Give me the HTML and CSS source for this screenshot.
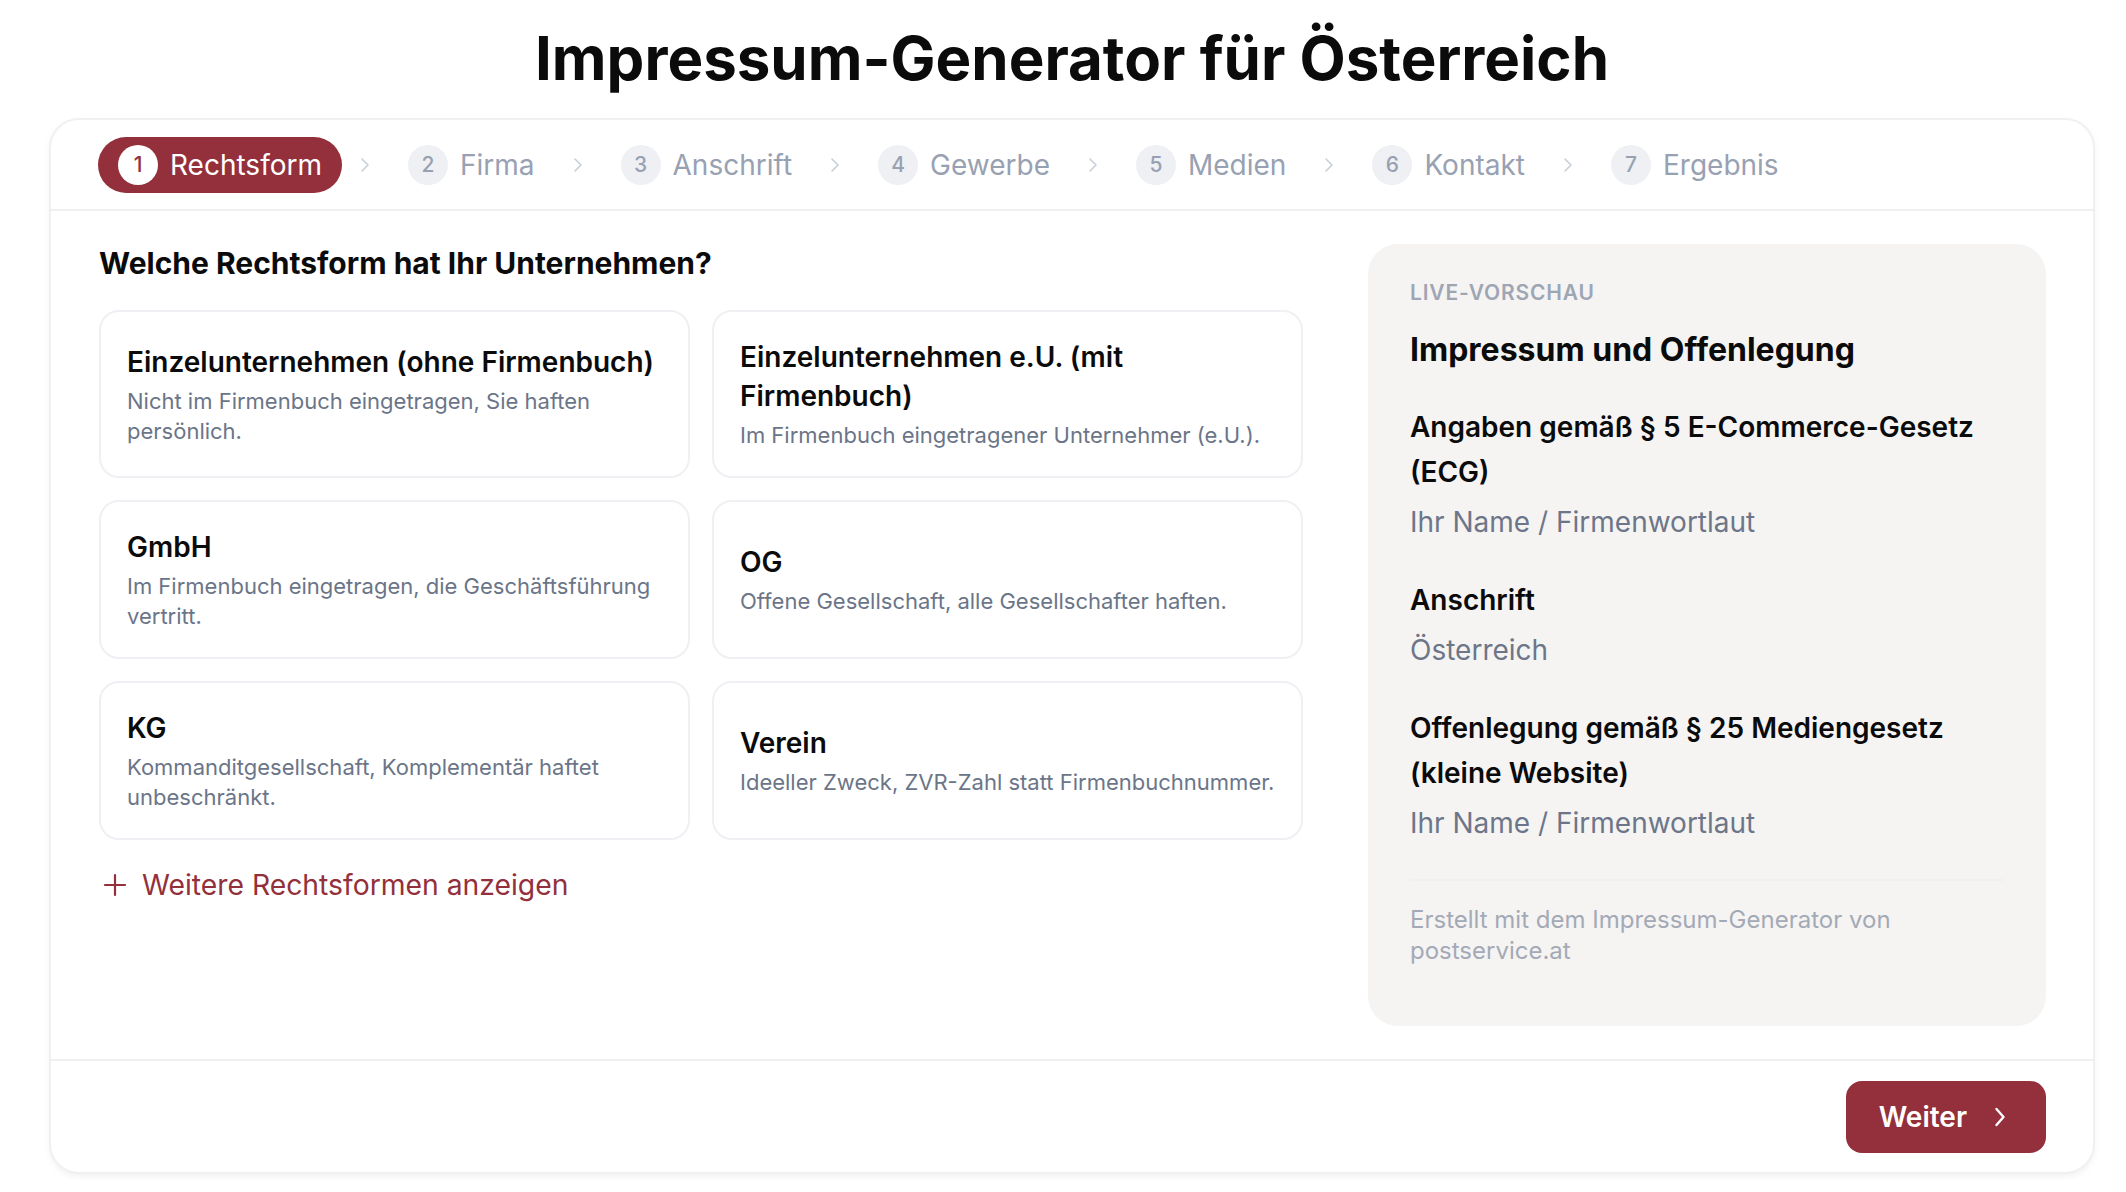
FILE: index.html
```html
<!DOCTYPE html>
<html lang="de">
<head>
    <meta charset="UTF-8">
    <meta name="viewport" content="width=device-width, initial-scale=1.0">
    <title>Impressum-Generator für Österreich</title>
    <link rel="stylesheet" href="styles.css">
</head>
<body>
    <div class="page">
        <h1 class="page-title">Impressum-Generator für Österreich</h1>

        <div class="wizard">
            <nav class="steps">
                <div class="step active"><span class="step-num">1</span><span>Rechtsform</span></div>
                <svg class="step-sep" viewBox="0 0 12 16"><path d="M3 2l6 6-6 6"/></svg>
                <div class="step"><span class="step-num">2</span><span>Firma</span></div>
                <svg class="step-sep" viewBox="0 0 12 16"><path d="M3 2l6 6-6 6"/></svg>
                <div class="step"><span class="step-num">3</span><span>Anschrift</span></div>
                <svg class="step-sep" viewBox="0 0 12 16"><path d="M3 2l6 6-6 6"/></svg>
                <div class="step"><span class="step-num">4</span><span>Gewerbe</span></div>
                <svg class="step-sep" viewBox="0 0 12 16"><path d="M3 2l6 6-6 6"/></svg>
                <div class="step"><span class="step-num">5</span><span>Medien</span></div>
                <svg class="step-sep" viewBox="0 0 12 16"><path d="M3 2l6 6-6 6"/></svg>
                <div class="step"><span class="step-num">6</span><span>Kontakt</span></div>
                <svg class="step-sep" viewBox="0 0 12 16"><path d="M3 2l6 6-6 6"/></svg>
                <div class="step"><span class="step-num">7</span><span>Ergebnis</span></div>
            </nav>

            <div class="wizard-body">
                <section class="form-col">
                    <h2 class="question">Welche Rechtsform hat Ihr Unternehmen?</h2>

                    <div class="options">
                        <div class="option">
                            <div class="option-title">Einzelunternehmen (ohne Firmenbuch)</div>
                            <div class="option-desc">Nicht im Firmenbuch eingetragen, Sie haften persönlich.</div>
                        </div>
                        <div class="option">
                            <div class="option-title">Einzelunternehmen e.U. (mit Firmenbuch)</div>
                            <div class="option-desc">Im Firmenbuch eingetragener Unternehmer (e.U.).</div>
                        </div>
                        <div class="option">
                            <div class="option-title">GmbH</div>
                            <div class="option-desc">Im Firmenbuch eingetragen, die Geschäftsführung vertritt.</div>
                        </div>
                        <div class="option">
                            <div class="option-title">OG</div>
                            <div class="option-desc">Offene Gesellschaft, alle Gesellschafter haften.</div>
                        </div>
                        <div class="option">
                            <div class="option-title">KG</div>
                            <div class="option-desc">Kommanditgesellschaft, Komplementär haftet unbeschränkt.</div>
                        </div>
                        <div class="option">
                            <div class="option-title">Verein</div>
                            <div class="option-desc">Ideeller Zweck, ZVR-Zahl statt Firmenbuchnummer.</div>
                        </div>
                    </div>

                    <button class="more-link" type="button">
                        <svg class="plus-icon" viewBox="0 0 24 24"><path d="M12 2v20M2 12h20"/></svg>
                        Weitere Rechtsformen anzeigen
                    </button>
                </section>

                <aside class="preview">
                    <div class="preview-label">Live-Vorschau</div>
                    <h3 class="preview-title">Impressum und Offenlegung</h3>

                    <div class="preview-section">
                        <div class="preview-heading">Angaben gemäß § 5 E-Commerce-Gesetz (ECG)</div>
                        <div class="preview-value">Ihr Name / Firmenwortlaut</div>
                    </div>
                    <div class="preview-section">
                        <div class="preview-heading">Anschrift</div>
                        <div class="preview-value">Österreich</div>
                    </div>
                    <div class="preview-section">
                        <div class="preview-heading">Offenlegung gemäß § 25 Mediengesetz (kleine Website)</div>
                        <div class="preview-value">Ihr Name / Firmenwortlaut</div>
                    </div>

                    <div class="preview-footer">Erstellt mit dem Impressum-Generator von postservice.at</div>
                </aside>
            </div>

            <div class="wizard-footer">
                <button class="btn-next" type="button">
                    Weiter
                    <svg class="btn-chevron" viewBox="0 0 12 22"><path d="M2.5 3l7 8-7 8"/></svg>
                </button>
            </div>
        </div>
    </div>
</body>
</html>
```

FILE: styles.css
```css
:root {
    --brand: #93303b;
    --text: #0b0b0c;
    --muted: #6b7588;
    --soft: #98a1b2;
    --line: #f0f0f2;
    --card-line: #eef0f3;
    --panel-bg: #f5f4f3;
}

* {
    box-sizing: border-box;
}

body {
    margin: 0;
    background: #fff;
    color: var(--text);
    font-family: Inter, "Noto Sans", "Liberation Sans", sans-serif;
}

.page {
    padding: 22px 31px 20px 49px;
}

.page-title {
    margin: 0 0 24px;
    font-size: 60px;
    line-height: 72px;
    font-weight: 700;
    text-align: center;
}

.wizard {
    background: #fff;
    border: 2px solid var(--line);
    border-radius: 30px;
    box-shadow: 0 3px 6px rgba(0, 0, 0, 0.05);
    overflow: hidden;
}

/* stepper */
.steps {
    display: flex;
    align-items: center;
    gap: 17px;
    padding: 17px 47px 16px;
    border-bottom: 2px solid var(--line);
}

.step {
    display: flex;
    align-items: center;
    gap: 12px;
    padding: 8px 20px;
    border-radius: 999px;
    font-size: 28px;
    line-height: 40px;
    color: var(--soft);
}

.step-num {
    width: 40px;
    height: 40px;
    border-radius: 50%;
    background: #eef0f4;
    display: grid;
    place-items: center;
    font-size: 21px;
    font-weight: 500;
}

.step.active {
    background: var(--brand);
    color: #fff;
}

.step.active .step-num {
    background: #fff;
    color: var(--brand);
}

.step-sep {
    width: 12px;
    height: 16px;
    fill: none;
    stroke: #c9cfd8;
    stroke-width: 1.6;
    stroke-linecap: round;
    stroke-linejoin: round;
}

/* body */
.wizard-body {
    display: grid;
    grid-template-columns: 1fr 678px;
    column-gap: 65px;
    padding: 33px 47px 33px 48px;
}

.question {
    margin: 0 0 27px;
    font-size: 30px;
    line-height: 39px;
    font-weight: 700;
}

.options {
    display: grid;
    grid-template-columns: 1fr 1fr;
    gap: 22px;
}

.option {
    display: flex;
    flex-direction: column;
    justify-content: center;
    padding: 26px 16px 26px 26px;
    border: 2px solid var(--card-line);
    border-radius: 20px;
}

.option-title {
    margin-bottom: 4px;
    font-size: 28px;
    line-height: 39px;
    font-weight: 600;
}

.option-desc {
    font-size: 22px;
    line-height: 30px;
    color: var(--muted);
}

.more-link {
    margin-top: 24px;
    padding: 0 0 0 4px;
    display: flex;
    align-items: center;
    gap: 15px;
    border: 0;
    background: none;
    font-family: inherit;
    font-size: 28.3px;
    line-height: 42px;
    color: var(--brand);
    cursor: pointer;
}

.plus-icon {
    width: 24px;
    height: 24px;
    fill: none;
    stroke: var(--brand);
    stroke-width: 2.2;
    stroke-linecap: round;
}

/* live preview */
.preview {
    background: var(--panel-bg);
    border-radius: 30px;
    padding: 32px 42px 60px;
}

.preview-label {
    font-size: 21px;
    line-height: 33px;
    font-weight: 600;
    letter-spacing: 0.04em;
    text-transform: uppercase;
    color: #9ea6b4;
}

.preview-title {
    margin: 18px 0 0;
    font-size: 32px;
    line-height: 45px;
    font-weight: 700;
}

.preview-section {
    margin-top: 33px;
}

.preview-section + .preview-section {
    margin-top: 35px;
}

.preview-heading {
    font-size: 28px;
    line-height: 45px;
    font-weight: 600;
}

.preview-value {
    margin-top: 6px;
    font-size: 28px;
    line-height: 42px;
    color: #6d7689;
}

.preview-footer {
    margin-top: 35px;
    padding-top: 23px;
    border-top: 2px solid #eff0f2;
    font-size: 24px;
    line-height: 31px;
    color: #a3aab6;
}

/* footer */
.wizard-footer {
    display: flex;
    justify-content: flex-end;
    padding: 20px 47px 19px;
    border-top: 2px solid var(--line);
}

.btn-next {
    height: 72px;
    padding: 0 40px 0 33px;
    display: flex;
    align-items: center;
    gap: 27px;
    border: 0;
    border-radius: 16px;
    background: var(--brand);
    color: #fff;
    font-family: inherit;
    font-size: 28px;
    font-weight: 600;
    cursor: pointer;
}

.btn-chevron {
    width: 12px;
    height: 22px;
    fill: none;
    stroke: #fff;
    stroke-width: 2.4;
    stroke-linecap: round;
    stroke-linejoin: round;
}
```
